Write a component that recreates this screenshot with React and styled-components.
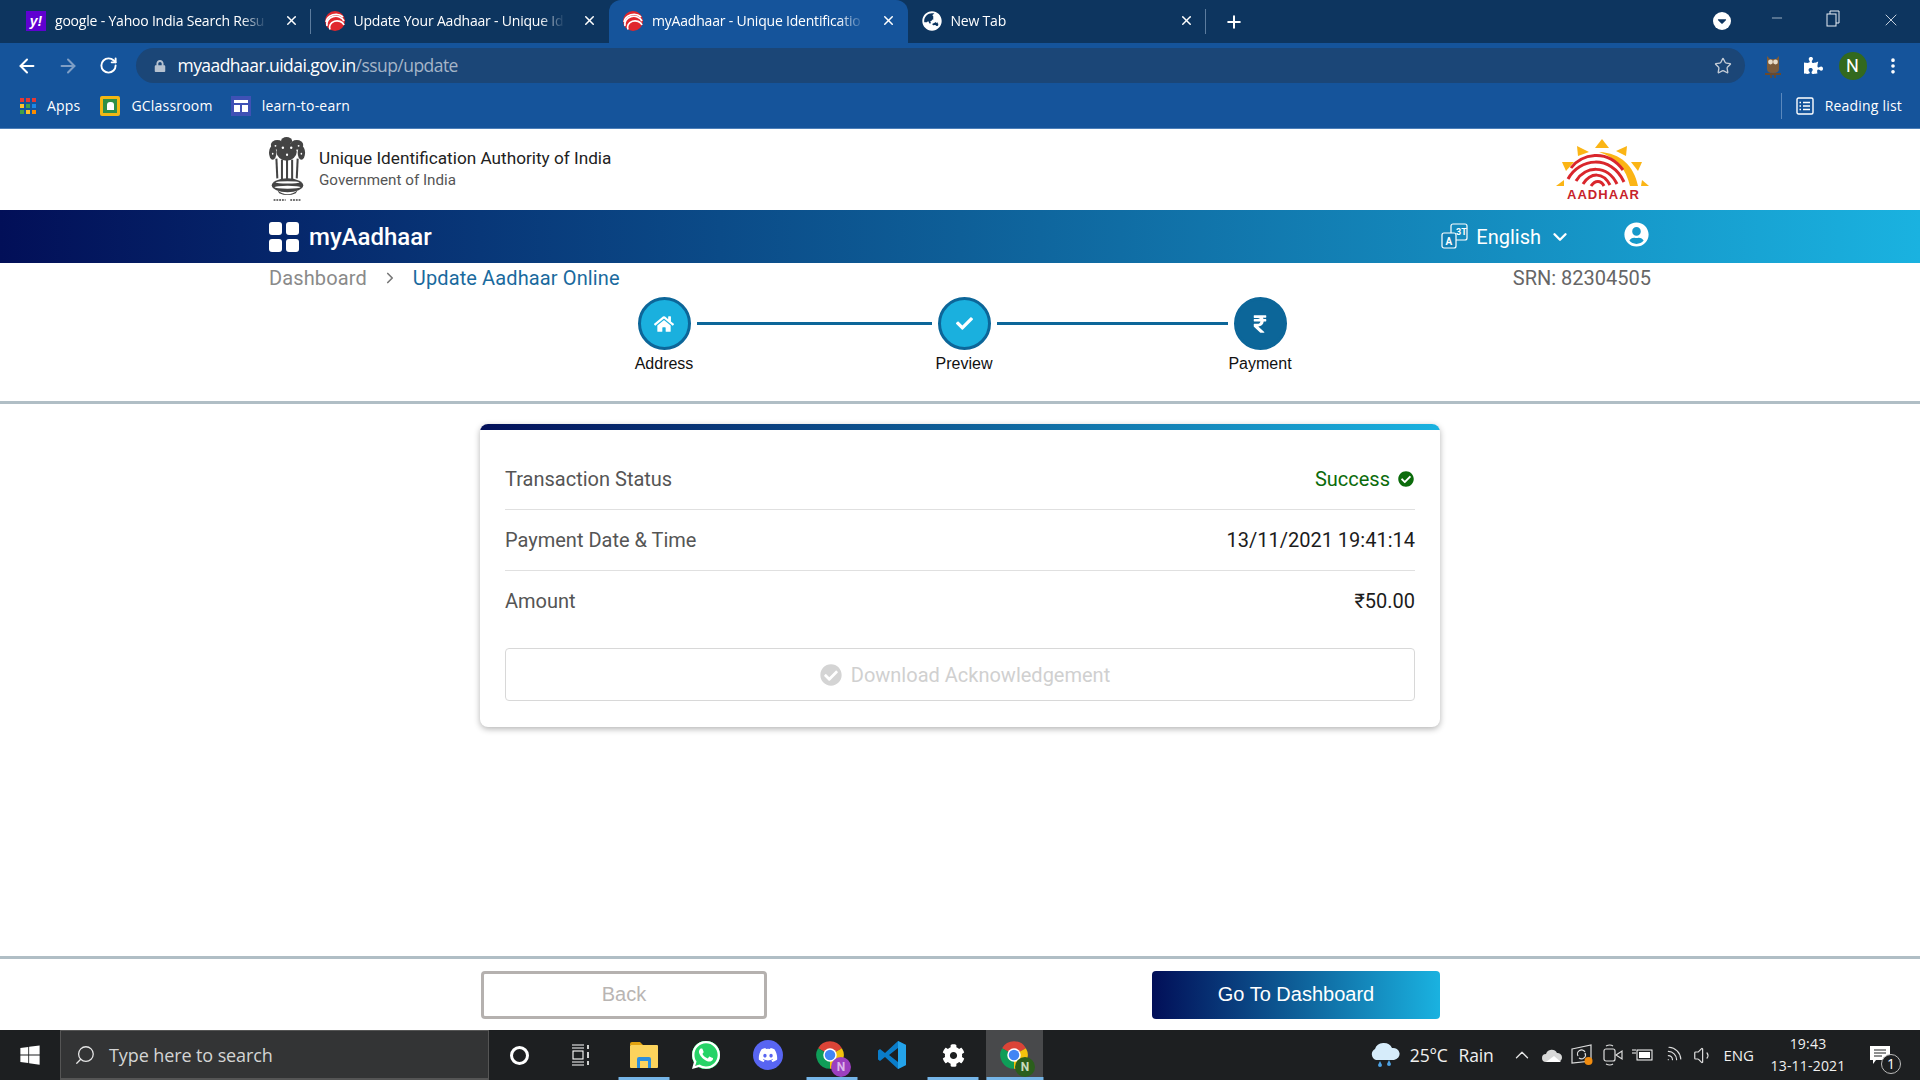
import styled, { createGlobalStyle } from "styled-components";
import {
	ArrowLeft,
	ArrowRight,
	RotateCw,
	Star,
	MoreVertical,
	X,
	Plus,
	Minus,
	ChevronDown,
	ChevronRight,
	ChevronUp,
	Search,
	Wifi,
	Volume1,
} from "lucide-react";
import {
	FaLock,
	FaPuzzlePiece,
	FaHome,
	FaCheck,
	FaRupeeSign,
	FaUserCircle,
	FaCheckCircle,
	FaWindows,
	FaWhatsapp,
	FaDiscord,
	FaCog,
	FaGlobeAsia,
	FaCaretDown,
} from "react-icons/fa";

const GRADIENT = "linear-gradient(90deg, #020f58 0%, #0e5f98 50%, #1ab2e0 100%)";

const GlobalStyle = createGlobalStyle`
	html, body {
		margin: 0;
		padding: 0;
		background: #fff;
	}
	* {
		box-sizing: border-box;
	}
`;

function AadhaarFavicon() {
	return (
		<FaviconSvg viewBox="0 0 20 20">
			<circle cx="10" cy="10" r="10" fill="#e0272d" />
			<g fill="none" stroke="#fff" strokeWidth="1.7">
				<path d="M1 11 A10 9 0 0 1 18 6" />
				<path d="M2 15 A9 8 0 0 1 19 10" />
				<path d="M5 18.5 A7 6 0 0 1 19 14" />
			</g>
		</FaviconSvg>
	);
}

function ChromeIcon({ badge, badgeColor, badgeText }) {
	return (
		<ChromeWrap>
			<svg width="30" height="30" viewBox="0 0 24 24">
				<path d="M12 12 L2.47 6.5 A11 11 0 0 1 21.53 6.5Z" fill="#db4437" />
				<path d="M12 12 L21.53 6.5 A11 11 0 0 1 12 23Z" fill="#f4c20d" />
				<path d="M12 12 L12 23 A11 11 0 0 1 2.47 6.5Z" fill="#0f9d58" />
				<circle cx="12" cy="12" r="5.4" fill="#fff" />
				<circle cx="12" cy="12" r="4.2" fill="#4285f4" />
			</svg>
			<ChromeBadge $bg={badgeColor} $color={badgeText}>
				{badge}
			</ChromeBadge>
		</ChromeWrap>
	);
}

function Emblem() {
	return (
		<EmblemSvg viewBox="6 2 40 67" preserveAspectRatio="none">
			<g fill="#444">
				<ellipse cx="25" cy="6" rx="6" ry="4" />
				<ellipse cx="15" cy="10" rx="7" ry="5" />
				<ellipse cx="36" cy="10" rx="7" ry="5" />
				<ellipse cx="10" cy="18" rx="4" ry="7" />
				<ellipse cx="41" cy="18" rx="4" ry="7" />
				<ellipse cx="25" cy="17" rx="11" ry="9" />
				<ellipse cx="26" cy="51" rx="17" ry="7" />
				<path d="M15 56 Q26 64 37 56 L35 59 Q26 63 17 59Z" />
			</g>
			<g stroke="#444" strokeWidth="2.2">
				<line x1="14" y1="24" x2="15" y2="44" />
				<line x1="20" y1="25" x2="20" y2="45" />
				<line x1="25.5" y1="25" x2="25.5" y2="45" />
				<line x1="31" y1="25" x2="31" y2="45" />
				<line x1="37" y1="24" x2="36" y2="44" />
			</g>
			<g fill="#fff">
				<circle cx="21" cy="13" r="1.3" />
				<circle cx="30" cy="13" r="1.3" />
				<circle cx="13" cy="11" r="1" />
				<circle cx="38" cy="11" r="1" />
				<circle cx="25.5" cy="20" r="1.2" />
				<circle cx="10" cy="19" r="0.9" />
				<circle cx="41" cy="19" r="0.9" />
				<ellipse cx="26" cy="48" rx="13" ry="1.2" />
				<ellipse cx="26" cy="53" rx="14" ry="1.5" />
			</g>
			<g stroke="#444" strokeWidth="1.6" strokeDasharray="2 1">
				<line x1="11" y1="66" x2="24" y2="66" />
				<line x1="29" y1="66" x2="41" y2="66" />
			</g>
		</EmblemSvg>
	);
}

function AadhaarLogo() {
	return (
		<LogoSvg viewBox="0 0 110 72">
			<g fill="#fbb515">
				<path d="M53 5 L46 14 L60 14Z" />
				<path d="M28 12 L40 18 L29 22Z" />
				<path d="M78 12 L67 17 L77 22Z" />
				<path d="M13 28 L25 28 L17 37Z" />
				<path d="M93 28 L82 28 L89 37Z" />
				<path d="M7 52 L15 52 L15 46Z" />
				<path d="M100 52 L92 52 L93 46Z" />
				<path d="M50 18 C72 19 85 32 89 52 L81 52 C77 35 68 24 50 18Z" />
			</g>
			<g fill="none" stroke="#d9262c" strokeWidth="3">
				<path d="M22 34 C32 20 58 14 74 36" />
				<path d="M19 45 C30 24 62 20 75 48" />
				<path d="M27 47 C36 32 58 30 68 50" />
				<path d="M34 50 C42 38 54 38 61 51" />
				<path d="M42 52 C46 46 52 46 55 52" />
			</g>
			<LogoText x="18" y="65" textLength="72" lengthAdjust="spacing">
				AADHAAR
			</LogoText>
		</LogoSvg>
	);
}

function LanguageIcon() {
	return (
		<svg width="27" height="27" viewBox="0 0 27 27" fill="none" stroke="#fff" strokeWidth="1.2">
			<rect x="10" y="1" width="16" height="16" rx="2" />
			<rect x="1" y="10" width="14" height="15" rx="2" fill="#127fb4" />
			<NavGlyph x="4.5" y="22" fontSize="10">A</NavGlyph>
			<NavGlyph x="15" y="12" fontSize="9">3T</NavGlyph>
		</svg>
	);
}

function TaskIcons() {
	return (
		<>
			<TaskSlot $w={60}>
				<Cortana />
			</TaskSlot>
			<TaskSlot $w={60}>
				<TaskView width="20" height="24" viewBox="0 0 20 24" fill="none" stroke="#fff" strokeWidth="1.1">
					<path d="M1 2 H13 M1 22 H13" />
					<path d="M1 5 H13 M1 19 H13" />
					<rect x="2" y="8" width="10" height="8" />
					<path d="M17 2 V6 M17 9 V15 M17 18 V22" strokeWidth="1.6" />
				</TaskView>
			</TaskSlot>
			<TaskSlot $w={70} $open>
				<svg width="30" height="28" viewBox="0 0 30 28">
					<path d="M1 3 Q1 1 3 1 H11 L14 4 H1Z" fill="#e2a20f" />
					<rect x="1" y="4" width="28" height="23" rx="1" fill="#fcd35c" />
					<path d="M8 27 V18 Q8 16 10 16 H20 Q22 16 22 18 V27 H19 V20 H11 V27Z" fill="#2d8fdc" />
				</svg>
			</TaskSlot>
			<TaskSlot $w={54}>
				<WhatsappBack>
					<FaWhatsapp size={32} color="#fff" />
				</WhatsappBack>
			</TaskSlot>
			<TaskSlot $w={70}>
				<DiscordBack>
					<FaDiscord size={20} color="#fff" />
				</DiscordBack>
			</TaskSlot>
			<TaskSlot $w={58} $open>
				<ChromeIcon badge="N" badgeColor="#9c3fbf" badgeText="#dcb7ea" />
			</TaskSlot>
			<TaskSlot $w={62}>
				<svg width="30" height="30" viewBox="0 0 30 30">
					<path d="M21 1 L29 5 V25 L21 29 L8 17 L3 21 L1 19.5 V10.5 L3 9 L8 13Z M21 8 L12 15 L21 22Z" fill="#0a7cc9" fillRule="evenodd" />
					<path d="M21 1 L29 5 V25 L21 29Z" fill="#24a3ea" />
				</svg>
			</TaskSlot>
			<TaskSlot $w={60} $open>
				<FaCog size={23} color="#fff" />
			</TaskSlot>
			<ActiveTaskSlot>
				<ChromeIcon badge="N" badgeColor="#2b5f1c" badgeText="#c7dcbc" />
			</ActiveTaskSlot>
		</>
	);
}

function Tray() {
	return (
		<TrayWrap>
			<TraySlot $w={34}>
				<svg width="30" height="30" viewBox="0 0 30 30">
					<path d="M6 20 A6 6 0 0 1 5 9 A9 8 0 0 1 22 8 A6.5 6 0 0 1 24 20Z" fill="#d6ecfa" />
					<path d="M10 21 L8 25 A2 2 0 0 0 12 25Z M19 20 L17 24 A2 2 0 0 0 21 24Z" fill="#4da3e6" />
				</svg>
			</TraySlot>
			<TrayText $ml={8}>25°C</TrayText>
			<TrayText $ml={11}>Rain</TrayText>
			<TraySlot $w={30} $ml={14}>
				<ChevronUp size={22} color="#e6e6e6" strokeWidth={1.4} />
			</TraySlot>
			<TraySlot $w={30}>
				<svg width="22" height="16" viewBox="0 0 22 16">
					<path d="M5 15 A4 4 0 0 1 5 7 A6 6 0 0 1 16 6 A4.5 4.5 0 0 1 17 15Z" fill="#d8d8d8" />
					<path d="M5 15 L13 9 L20 15Z" fill="#fff" />
				</svg>
			</TraySlot>
			<TraySlot $w={32}>
				<svg width="24" height="22" viewBox="0 0 24 22" fill="none" stroke="#ddd" strokeWidth="1.2">
					<path d="M1 5 L20 1 V17 L1 19Z" />
					<path d="M7 12 A4 4 0 0 1 14 8 M14 9 A4 4 0 0 1 8 14" />
					<circle cx="17.5" cy="17" r="4" fill="#f28c0f" stroke="none" />
				</svg>
			</TraySlot>
			<TraySlot $w={28}>
				<svg width="22" height="22" viewBox="0 0 22 22" fill="none" stroke="#ddd" strokeWidth="1.2">
					<rect x="2" y="5" width="11" height="12" rx="2" />
					<path d="M14 11 L20 7 V15Z" />
					<path d="M4 2 Q8 0 11 2 M4 20 Q8 22 11 20" />
				</svg>
			</TraySlot>
			<TraySlot $w={30}>
				<svg width="22" height="16" viewBox="0 0 22 16">
					<path d="M1 3 H5 M1 6 H5" stroke="#fff" strokeWidth="1" />
					<rect x="6" y="3" width="15" height="10" fill="none" stroke="#fff" strokeWidth="1" />
					<rect x="8" y="5" width="11" height="6" fill="#fff" />
				</svg>
			</TraySlot>
			<TraySlot $w={32}>
				<WifiIcon size={20} color="#ddd" strokeWidth={1.4} />
			</TraySlot>
			<TraySlot $w={28}>
				<Volume1 size={21} color="#ddd" strokeWidth={1.4} />
			</TraySlot>
			<TrayLang>ENG</TrayLang>
			<Clock>
				<span>19:43</span>
				<span>13-11-2021</span>
			</Clock>
			<Notify>
				<svg width="20" height="18" viewBox="0 0 20 18">
					<path d="M0 0 H20 V14 H6 L3 18 V14 H0Z" fill="#fff" />
					<path d="M4 4 H16 M4 7 H16 M4 10 H12" stroke="#1e2022" strokeWidth="1" />
				</svg>
				<NotifyCount>1</NotifyCount>
			</Notify>
		</TrayWrap>
	);
}

export default function App() {
	return (
		<Screen>
			<GlobalStyle />
			<TabStrip>
				<Tab $sep>
					<YahooIcon>y!</YahooIcon>
					<TabTitle>google - Yahoo India Search Resu</TabTitle>
					<X size={15} color="#fff" strokeWidth={2.4} />
				</Tab>
				<Tab>
					<AadhaarFavicon />
					<TabTitle>Update Your Aadhaar - Unique Id</TabTitle>
					<X size={15} color="#fff" strokeWidth={2.4} />
				</Tab>
				<Tab $active>
					<AadhaarFavicon />
					<TabTitle>myAadhaar - Unique Identificatio</TabTitle>
					<X size={15} color="#fff" strokeWidth={2.4} />
				</Tab>
				<Tab $sep>
					<FaGlobeAsia size={20} color="#fff" />
					<TabTitle>New Tab</TabTitle>
					<X size={15} color="#fff" strokeWidth={2.4} />
				</Tab>
				<NewTab>
					<Plus size={20} color="#fff" strokeWidth={2.4} />
				</NewTab>
				<ProfileDown>
					<FaCaretDown size={14} color="#0e355f" />
				</ProfileDown>
				<WindowButtons>
					<Minus size={16} color="#e8eef5" strokeWidth={1} />
					<RestoreIcon />
					<X size={20} color="#e8eef5" strokeWidth={1} />
				</WindowButtons>
			</TabStrip>

			<Toolbar>
				<NavButton>
					<ArrowLeft size={22} color="#fff" strokeWidth={2.2} />
				</NavButton>
				<NavButton>
					<ArrowRight size={22} color="#7f9fc6" strokeWidth={2.2} />
				</NavButton>
				<NavButton>
					<RotateCw size={19} color="#fff" strokeWidth={2.4} />
				</NavButton>
				<Omnibox>
					<FaLock size={12} color="#b6c2d0" />
					<Url>
						myaadhaar.uidai.gov.in<UrlPath>/ssup/update</UrlPath>
					</Url>
					<Star size={18} color="#c4ccd6" strokeWidth={1.8} />
				</Omnibox>
				<ToolIcons>
					<svg width="18" height="26" viewBox="0 0 18 26">
						<path d="M3 3 L6 6 H12 L15 3 V16 Q15 20 9 20 Q3 20 3 16Z" fill="#7a5a3a" />
						<circle cx="6.5" cy="9" r="2.4" fill="#e8dcc8" />
						<circle cx="11.5" cy="9" r="2.4" fill="#e8dcc8" />
						<path d="M1 21 H17" stroke="#6b4a2c" strokeWidth="2" />
						<path d="M7 20 V25 M11 20 V25" stroke="#6b4a2c" strokeWidth="1.5" />
					</svg>
					<Puzzle size={19} color="#fff" />
					<Avatar>N</Avatar>
					<MoreVertical size={20} color="#fff" strokeWidth={2.4} />
				</ToolIcons>
			</Toolbar>

			<BookmarkBar>
				<Bookmark>
					<AppsGrid>
						{["#e53935", "#e53935", "#e53935", "#fbc02d", "#43a047", "#1e88e5", "#43a047", "#fbc02d", "#fb8c00"].map((c, i) => (
							<i key={i} style={{ background: c }} />
						))}
					</AppsGrid>
					Apps
				</Bookmark>
				<Bookmark $ml={20}>
					<ClassroomIcon>
						<i />
					</ClassroomIcon>
					GClassroom
				</Bookmark>
				<Bookmark $ml={18}>
					<LearnIcon>
						<svg width="14" height="14" viewBox="0 0 14 14" fill="#fff">
							<rect x="0" y="1" width="14" height="3" />
							<rect x="0" y="6" width="6" height="7" />
							<rect x="8" y="6" width="6" height="7" />
						</svg>
					</LearnIcon>
					learn-to-earn
				</Bookmark>
				<ReadingList>
					<svg width="18" height="18" viewBox="0 0 18 18" fill="none" stroke="#fff" strokeWidth="1.4">
						<rect x="1" y="1" width="16" height="16" rx="1.5" />
						<path d="M7 5.5 H14 M7 9 H14 M7 12.5 H14 M3.5 5.5 H5 M3.5 9 H5 M3.5 12.5 H5" />
					</svg>
					Reading list
				</ReadingList>
			</BookmarkBar>

			<Page>
				<BrandRow>
					<Emblem />
					<BrandText>
						<BrandTitle>Unique Identification Authority of India</BrandTitle>
						<BrandSub>Government of India</BrandSub>
					</BrandText>
					<AadhaarLogo />
				</BrandRow>

				<NavBar>
					<AppGrid>
						<i />
						<i />
						<i />
						<i />
					</AppGrid>
					<AppName>myAadhaar</AppName>
					<LangPicker>
						<LanguageIcon />
						<span>English</span>
						<ChevronDown size={22} color="#fff" strokeWidth={2.6} />
					</LangPicker>
					<UserIcon>
						<FaUserCircle size={25} color="#fff" />
					</UserIcon>
				</NavBar>

				<Crumbs>
					<CrumbLink>Dashboard</CrumbLink>
					<ChevronRight size={18} color="#777" strokeWidth={2.2} />
					<CrumbCurrent>Update Aadhaar Online</CrumbCurrent>
					<Srn>SRN: 82304505</Srn>
				</Crumbs>

				<Stepper>
					<Step label="Address">
						<FaHome size={20} color="#fff" />
					</Step>
					<StepLine $w={235} />
					<Step label="Preview">
						<FaCheck size={17} color="#fff" />
					</Step>
					<StepLine $w={231} />
					<Step label="Payment" $filled>
						<FaRupeeSign size={20} color="#fff" />
					</Step>
				</Stepper>

				<Main>
					<Card>
						<CardBar />
						<CardBody>
							<Row $border>
								<RowLabel>Transaction Status</RowLabel>
								<SuccessValue>
									Success <FaCheckCircle size={16} color="#0b6b0b" />
								</SuccessValue>
							</Row>
							<Row $border>
								<RowLabel>Payment Date &amp; Time</RowLabel>
								<RowValue>13/11/2021 19:41:14</RowValue>
							</Row>
							<Row>
								<RowLabel>Amount</RowLabel>
								<RowValue>₹50.00</RowValue>
							</Row>
							<DownloadButton>
								<FaCheckCircle size={22} color="#d4d4d4" />
								Download Acknowledgement
							</DownloadButton>
						</CardBody>
					</Card>
				</Main>

				<Footer>
					<BackButton>Back</BackButton>
					<DashButton>Go To Dashboard</DashButton>
				</Footer>
			</Page>

			<Taskbar>
				<StartButton>
					<FaWindows size={22} color="#fff" />
				</StartButton>
				<SearchBox>
					<SearchGlass size={22} color="#e6e6e6" strokeWidth={1.4} />
					Type here to search
				</SearchBox>
				<TaskIcons />
				<Tray />
			</Taskbar>
		</Screen>
	);
}

function Step({ label, children, $filled }) {
	return (
		<StepCol>
			<StepCircle $filled={$filled}>{children}</StepCircle>
			<StepLabel>{label}</StepLabel>
		</StepCol>
	);
}

function RestoreIcon() {
	return (
		<svg width="14" height="17" viewBox="0 0 14 17" fill="none" stroke="#e8eef5" strokeWidth="1">
			<rect x="1" y="4" width="9" height="12" />
			<path d="M4 4 V1 H13 V13 H10" />
		</svg>
	);
}

const Screen = styled.div`
	width: 1920px;
	height: 1080px;
	display: flex;
	flex-direction: column;
	overflow: hidden;
	font-family: Roboto, "Liberation Sans", sans-serif;
`;

const TabStrip = styled.div`
	height: 43px;
	flex: none;
	display: flex;
	align-items: stretch;
	padding-left: 12px;
	background: #0d355f;
`;

const Tab = styled.div`
	width: 298.5px;
	display: flex;
	align-items: center;
	gap: 9px;
	padding: 0 12px 2px 14px;
	border-radius: 12px 12px 0 0;
	background: ${({ $active }) => ($active ? "#15549b" : "transparent")};
	position: relative;
	&::after {
		content: "";
		display: ${({ $sep }) => ($sep ? "block" : "none")};
		position: absolute;
		right: 0;
		top: 9px;
		bottom: 9px;
		width: 1px;
		background: #5c7c9e;
	}
`;

const FaviconSvg = styled.svg`
	width: 20px;
	height: 20px;
	flex: none;
`;

const YahooIcon = styled.span`
	width: 20px;
	height: 20px;
	flex: none;
	background: #5f01d1;
	color: #fff;
	font: italic 700 14px/20px "Liberation Sans", sans-serif;
	text-align: center;
`;

const TabTitle = styled.span`
	flex: 1;
	min-width: 0;
	margin-right: 8px;
	white-space: nowrap;
	color: #fff;
	font: 400 14px/18px "Open Sans", sans-serif;
	letter-spacing: -0.2px;
	-webkit-mask-image: linear-gradient(90deg, #000 88%, transparent 100%);
	mask-image: linear-gradient(90deg, #000 88%, transparent 100%);
`;

const NewTab = styled.div`
	width: 56px;
	display: flex;
	align-items: center;
	justify-content: center;
`;

const ProfileDown = styled.div`
	width: 18px;
	height: 18px;
	margin: 12px 0 0 451px;
	border-radius: 50%;
	background: #fff;
	display: flex;
	align-items: center;
	justify-content: center;
`;

const WindowButtons = styled.div`
	display: flex;
	align-items: flex-start;
	justify-content: space-between;
	width: 151px;
	margin-left: 38px;
	padding-top: 10px;
	padding-right: 19px;
`;

const Toolbar = styled.div`
	height: 45px;
	flex: none;
	display: flex;
	align-items: center;
	padding: 0 0 0 7px;
	background: #15549b;
`;

const NavButton = styled.div`
	width: 40px;
	display: flex;
	justify-content: center;
	margin-right: 0.5px;
`;

const Omnibox = styled.div`
	width: 1609px;
	height: 35px;
	margin-left: 7px;
	padding: 0 13px 0 18px;
	border-radius: 18px;
	background: #1b4677;
	display: flex;
	align-items: center;
`;

const Url = styled.span`
	flex: 1;
	margin-left: 12px;
	padding-bottom: 2px;
	color: #fff;
	font: 400 17.5px/20px "Open Sans", sans-serif;
	letter-spacing: -0.55px;
`;

const UrlPath = styled.span`
	color: #a5b5c8;
`;

const ToolIcons = styled.div`
	flex: 1;
	display: flex;
	align-items: center;
	gap: 16px;
	padding-left: 19px;
`;

const Puzzle = styled(FaPuzzlePiece)`
	margin-left: 6px;
`;

const Avatar = styled.span`
	width: 28px;
	height: 28px;
	border-radius: 50%;
	background: #33691e;
	color: #fff;
	font: 400 18px/28px Roboto, sans-serif;
	text-align: center;
`;

const BookmarkBar = styled.div`
	height: 41px;
	flex: none;
	display: flex;
	align-items: center;
	padding: 0 18px 5px 20px;
	background: #15549b;
	border-bottom: 1px solid #4d7fb8;
`;

const Bookmark = styled.div`
	display: flex;
	align-items: center;
	gap: 11px;
	margin-left: ${({ $ml }) => $ml || 0}px;
	color: #fff;
	font: 400 14px/18px "Open Sans", sans-serif;
	letter-spacing: 0.2px;
`;

const AppsGrid = styled.span`
	display: grid;
	grid-template-columns: repeat(3, 4px);
	grid-auto-rows: 4px;
	gap: 2px;
	i {
		display: block;
	}
`;

const ClassroomIcon = styled.span`
	width: 20px;
	height: 20px;
	background: #2f8f46;
	border: 3px solid #f3b713;
	border-radius: 2px;
	display: flex;
	align-items: center;
	justify-content: center;
	i {
		width: 7px;
		height: 8px;
		background: #fff;
		border-radius: 3px 3px 0 0;
	}
`;

const LearnIcon = styled.span`
	width: 20px;
	height: 20px;
	background: #3f51b5;
	display: flex;
	align-items: center;
	justify-content: center;
`;

const ReadingList = styled.div`
	margin-left: auto;
	height: 26px;
	display: flex;
	align-items: center;
	gap: 11px;
	padding-left: 14px;
	border-left: 1px solid #5a88bd;
	color: #fff;
	font: 400 14px/18px "Open Sans", sans-serif;
	letter-spacing: 0.2px;
`;

const Page = styled.div`
	flex: 1;
	min-height: 0;
	display: flex;
	flex-direction: column;
	background: #fff;
`;

const BrandRow = styled.div`
	height: 81px;
	flex: none;
	display: flex;
	align-items: center;
	padding: 0 270px 0 269px;
`;

const EmblemSvg = styled.svg`
	width: 37px;
	height: 66px;
	flex: none;
`;

const BrandText = styled.div`
	flex: 1;
	margin-left: 13px;
	padding-bottom: 4px;
	display: flex;
	flex-direction: column;
	gap: 2px;
`;

const BrandTitle = styled.div`
	color: #222;
	font: 400 17.2px/22px Roboto, sans-serif;
`;

const BrandSub = styled.div`
	color: #555;
	font: 400 15.2px/18px Roboto, sans-serif;
`;

const LogoSvg = styled.svg`
	width: 110px;
	height: 72px;
	margin-right: -9px;
	flex: none;
`;

const LogoText = styled.text`
	fill: #c8232a;
	font: 700 13px "Liberation Sans", sans-serif;
`;

const NavGlyph = styled.text`
	fill: #fff;
	stroke: none;
	font-family: Roboto, sans-serif;
	font-weight: 700;
`;

const NavBar = styled.div`
	height: 53px;
	flex: none;
	display: flex;
	align-items: center;
	padding: 0 271px 0 269px;
	background: ${GRADIENT};
`;

const AppGrid = styled.span`
	display: grid;
	grid-template-columns: 13px 13px;
	grid-auto-rows: 13px;
	gap: 4px;
	i {
		display: block;
		background: #fff;
		border-radius: 3px;
	}
`;

const AppName = styled.span`
	flex: 1;
	margin-left: 10px;
	color: #fff;
	font: 500 24px/30px Roboto, sans-serif;
`;

const LangPicker = styled.div`
	display: flex;
	align-items: center;
	gap: 8px;
	color: #fff;
	font: 400 20px/26px Roboto, sans-serif;
`;

const UserIcon = styled.span`
	display: flex;
	margin: -5px 0 0 53px;
`;

const Crumbs = styled.div`
	height: 31px;
	flex: none;
	display: flex;
	align-items: center;
	padding: 0 269px 2px;
	font: 400 20px/26px Roboto, sans-serif;
	letter-spacing: 0.12px;
`;

const CrumbLink = styled.span`
	color: #8a8a8a;
	margin-right: 14px;
`;

const CrumbCurrent = styled.span`
	flex: 1;
	margin-left: 14px;
	color: #1a6a9e;
`;

const Srn = styled.span`
	color: #666;
	letter-spacing: 0;
`;

const Stepper = styled.div`
	height: 110px;
	flex: none;
	display: flex;
	align-items: flex-start;
	padding: 3px 0 0 637.5px;
	border-bottom: 3px solid #b0bec5;
`;

const StepCol = styled.div`
	width: 53px;
	display: flex;
	flex-direction: column;
	align-items: center;
`;

const StepCircle = styled.div`
	width: 53px;
	height: 53px;
	flex: none;
	border-radius: 50%;
	border: 3px solid #0c6699;
	background: ${({ $filled }) => ($filled ? "#0c6699" : "#1ab0de")};
	display: flex;
	align-items: center;
	justify-content: center;
`;

const StepLabel = styled.div`
	margin-top: 5px;
	color: #111;
	white-space: nowrap;
	font: 400 16px/18px "Liberation Sans", sans-serif;
`;

const StepLine = styled.div`
	width: ${({ $w }) => $w}px;
	height: 3px;
	margin: 25px 6px 0;
	background: #0c6699;
`;

const Main = styled.div`
	flex: 1;
	min-height: 0;
	display: flex;
	justify-content: center;
	align-items: flex-start;
	padding-top: 20px;
`;

const Card = styled.div`
	width: 960px;
	height: 303px;
	border-radius: 8px;
	background: #fff;
	box-shadow: 0 2px 6px rgba(0, 0, 0, 0.3);
	overflow: hidden;
`;

const CardBar = styled.div`
	height: 6px;
	background: ${GRADIENT};
`;

const CardBody = styled.div`
	padding: 19px 25px 0;
`;

const Row = styled.div`
	height: ${({ $border }) => ($border ? "61px" : "59px")};
	display: flex;
	align-items: center;
	justify-content: space-between;
	border-bottom: ${({ $border }) => ($border ? "1px solid #e0e0e0" : "none")};
`;

const RowLabel = styled.span`
	color: #555;
	font: 400 20px/26px Roboto, sans-serif;
`;

const RowValue = styled.span`
	color: #1c1c1c;
	font: 400 20px/26px Roboto, sans-serif;
`;

const SuccessValue = styled(RowValue)`
	display: flex;
	align-items: center;
	gap: 8px;
	padding-right: 1px;
	color: #0b6b0b;
`;

const DownloadButton = styled.div`
	height: 53px;
	margin-top: 18px;
	padding-left: 10px;
	border: 1px solid #d8d8d8;
	border-radius: 4px;
	display: flex;
	align-items: center;
	justify-content: center;
	gap: 9px;
	color: #d0d0d0;
	font: 400 20px/26px Roboto, sans-serif;
`;

const Footer = styled.div`
	height: 74px;
	flex: none;
	display: flex;
	justify-content: space-between;
	padding: 12px 480px 0 481px;
	border-top: 3px solid #b0bec5;
`;

const BackButton = styled.div`
	width: 286px;
	height: 48px;
	padding-bottom: 2px;
	border: 3px solid #b5b1af;
	border-radius: 4px;
	display: flex;
	align-items: center;
	justify-content: center;
	color: #b9b5b3;
	font: 400 20px/24px "Liberation Sans", sans-serif;
`;

const DashButton = styled.div`
	width: 288px;
	height: 48px;
	padding-bottom: 2px;
	border-radius: 4px;
	background: ${GRADIENT};
	display: flex;
	align-items: center;
	justify-content: center;
	color: #fff;
	font: 400 20px/24px "Liberation Sans", sans-serif;
`;

const Taskbar = styled.div`
	height: 50px;
	flex: none;
	display: flex;
	align-items: stretch;
	background: #1d1f21;
`;

const StartButton = styled.div`
	width: 60px;
	display: flex;
	align-items: center;
	justify-content: center;
`;

const SearchBox = styled.div`
	width: 429px;
	display: flex;
	align-items: center;
	gap: 13px;
	padding-left: 13px;
	background: #333435;
	border: 1px solid #555;
	border-bottom-width: 2px;
	color: #d4d4d4;
	font: 400 18px/24px "Open Sans", sans-serif;
	letter-spacing: -0.1px;
`;

const SearchGlass = styled(Search)`
	transform: scaleX(-1);
`;

const TaskSlot = styled.div`
	width: ${({ $w }) => $w}px;
	flex: none;
	display: flex;
	align-items: center;
	justify-content: center;
	position: relative;
	&::after {
		content: "";
		display: ${({ $open }) => ($open ? "block" : "none")};
		position: absolute;
		left: 50%;
		bottom: 0;
		width: 51px;
		height: 3px;
		transform: translateX(-50%);
		background: #75b5e8;
	}
`;

const ActiveTaskSlot = styled(TaskSlot)`
	width: 57px;
	margin-left: 3px;
	padding-left: 3px;
	background: #48494b;
	&::after {
		display: block;
		width: 57px;
	}
`;

const TaskView = styled.svg`
	margin-left: 3px;
`;

const Cortana = styled.span`
	width: 19px;
	height: 19px;
	border: 3px solid #fff;
	border-radius: 50%;
`;

const WhatsappBack = styled.span`
	display: flex;
	background: radial-gradient(circle at 50% 50%, #25d366 62%, transparent 64%);
`;

const DiscordBack = styled.span`
	width: 30px;
	height: 30px;
	border-radius: 50%;
	background: #5865f2;
	display: flex;
	align-items: center;
	justify-content: center;
`;

const ChromeWrap = styled.span`
	position: relative;
	display: flex;
	margin-left: -4px;
`;

const ChromeBadge = styled.span`
	position: absolute;
	right: -6px;
	bottom: -7px;
	width: 20px;
	height: 20px;
	border-radius: 50%;
	background: ${({ $bg }) => $bg};
	color: ${({ $color }) => $color};
	font: 700 12px/20px Roboto, sans-serif;
	text-align: center;
`;

const TrayWrap = styled.div`
	margin-left: auto;
	display: flex;
	align-items: center;
	color: #f0f0f0;
`;

const TraySlot = styled.div`
	width: ${({ $w }) => $w}px;
	margin-left: ${({ $ml }) => $ml || 0}px;
	display: flex;
	justify-content: center;
`;

const TrayText = styled.span`
	margin-left: ${({ $ml }) => $ml || 0}px;
	font: 400 17.5px/22px "Open Sans", sans-serif;
	letter-spacing: -0.2px;
`;

const WifiIcon = styled(Wifi)`
	transform: rotate(45deg);
`;

const TrayLang = styled.span`
	margin-left: 6px;
	font: 400 15px/18px "Open Sans", sans-serif;
`;

const Clock = styled.div`
	width: 92px;
	margin-left: 8px;
	display: flex;
	flex-direction: column;
	align-items: center;
	gap: 6px;
	font: 400 14px/16px "Open Sans", sans-serif;
	letter-spacing: 0.2px;
`;

const Notify = styled.div`
	position: relative;
	width: 46px;
	margin-left: 3px;
	margin-right: 17px;
	display: flex;
	justify-content: center;
`;

const NotifyCount = styled.span`
	position: absolute;
	right: 2px;
	bottom: -10px;
	width: 20px;
	height: 20px;
	border: 1px solid #bbb;
	border-radius: 50%;
	background: #1d1f21;
	color: #fff;
	font: 400 14px/18px "Open Sans", sans-serif;
	text-align: center;
`;
